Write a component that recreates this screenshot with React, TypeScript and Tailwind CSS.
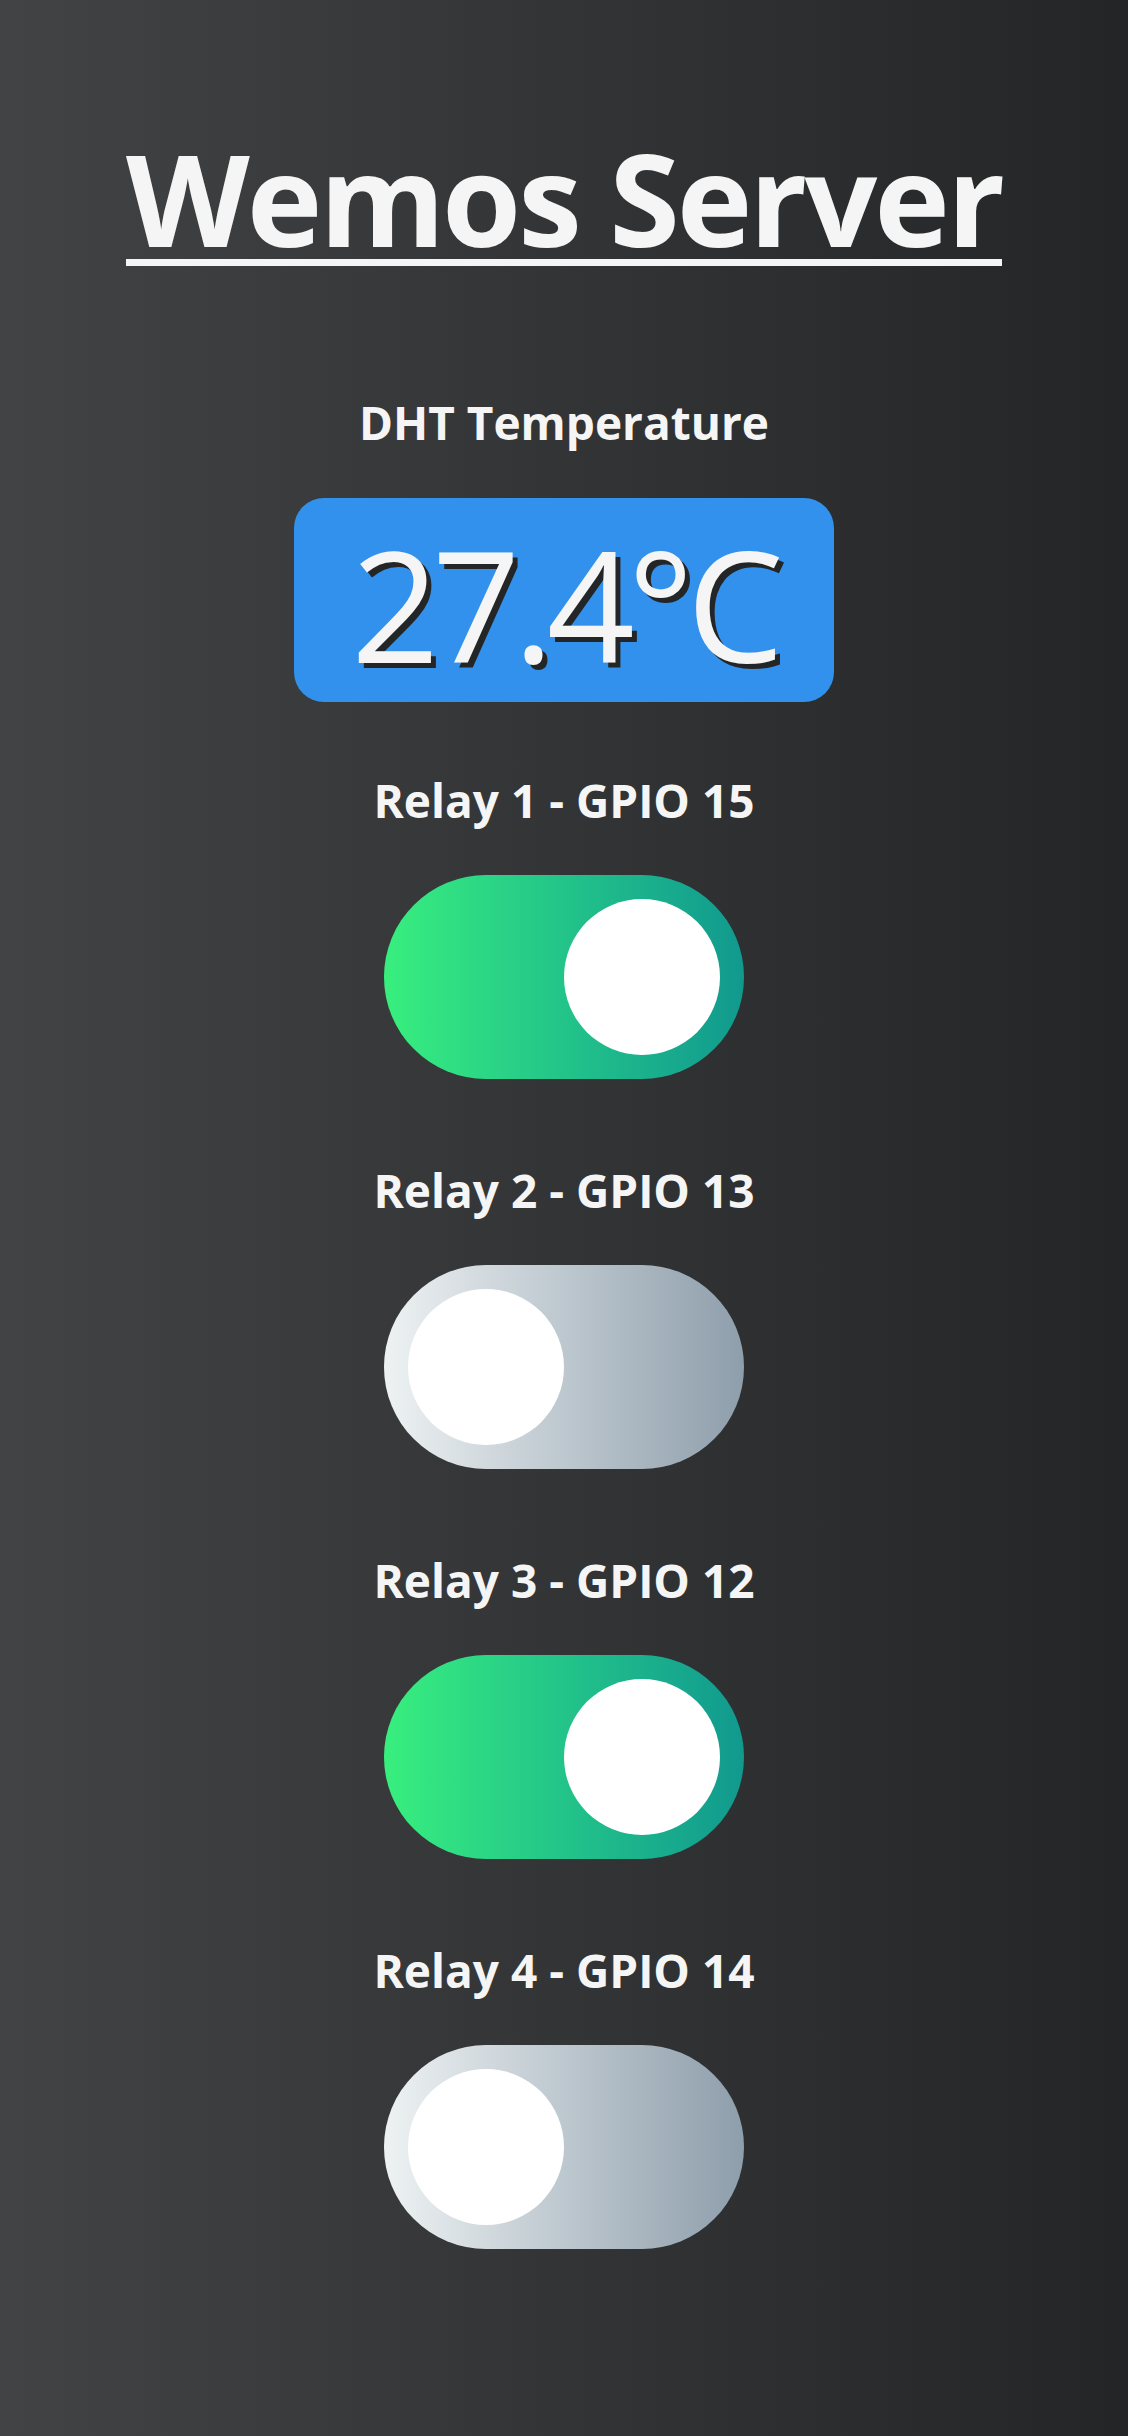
import { useState } from "react";

const relays = [
    { id: 1, gpio: 15, on: true },
    { id: 2, gpio: 13, on: false },
    { id: 3, gpio: 12, on: true },
    { id: 4, gpio: 14, on: false },
];

function Toggle({ on, onClick }: { on: boolean; onClick: () => void }) {
    return (
        <button
            onClick={onClick}
            className={`flex items-center w-[360px] h-[204px] rounded-full px-[24px] ${
                on
                    ? "justify-end bg-gradient-to-r from-[#38ef7d] to-[#11998e]"
                    : "justify-start bg-gradient-to-r from-[#eef2f3] to-[#8e9eab]"
            }`}
        >
            <span className="block w-[156px] h-[156px] rounded-full bg-white" />
        </button>
    );
}

export default function App() {
    const [states, setStates] = useState(relays.map((r) => r.on));

    return (
        <div className="min-h-screen bg-[linear-gradient(to_right,#414345,#232526)] text-[#f5f5f5] font-['Open_Sans',sans-serif] flex flex-col items-center pt-[134px]">
            <h1 className="text-[128px] leading-[128px] font-bold tracking-[-3px] underline decoration-[length:7px] underline-offset-[12px]">
                Wemos Server
            </h1>

            <h2 className="mt-[137px] text-[46px] leading-[46px] font-bold">
                DHT Temperature
            </h2>

            <div className="mt-[53px] w-[540px] h-[204px] rounded-[30px] bg-[#3291ed] flex items-center justify-center pt-[6px]">
                <span className="text-[154px] leading-[154px] tracking-[-7px] [text-shadow:5px_5px_0px_#232526]">
                    27.4°C
                </span>
            </div>

            <div className="mt-[75px] flex flex-col items-center">
                {relays.map((relay, i) => (
                    <div key={relay.id} className="flex flex-col items-center pb-[88px]">
                        <h3 className="text-[46px] leading-[46px] font-bold">
                            Relay {relay.id} - GPIO {relay.gpio}
                        </h3>
                        <div className="mt-[52px]">
                            <Toggle
                                on={states[i]}
                                onClick={() =>
                                    setStates((s) => s.map((v, j) => (j === i ? !v : v)))
                                }
                            />
                        </div>
                    </div>
                ))}
            </div>
        </div>
    );
}
